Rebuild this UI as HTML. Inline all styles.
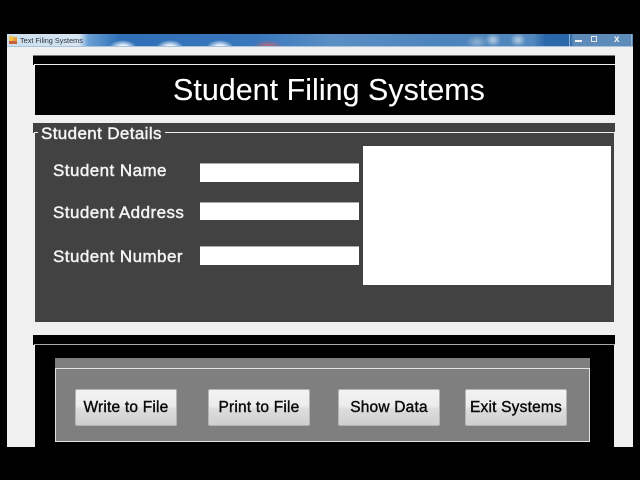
<!DOCTYPE html>
<html>
<head>
<meta charset="utf-8">
<style>
html,body{margin:0;padding:0;background:#000;}
body{width:640px;height:480px;position:relative;overflow:hidden;font-family:"Liberation Sans",sans-serif;}
div{position:absolute;box-sizing:border-box;}
.t{white-space:nowrap;}
.lbl{color:#f4f4f4;font-size:17px;-webkit-text-stroke:0.45px #f4f4f4;left:53px;line-height:18px;letter-spacing:.44px;}
.in{background:#fff;left:200px;width:159px;border:1px solid #aaa;border-width:1px 0 0 0;}
.btn{top:389px;height:37px;width:102px;background:linear-gradient(#f3f3f3 0%,#ececec 45%,#dcdcdc 55%,#cfcfcf 100%);border:1px solid #b4b4b4;border-radius:2px;color:#0a0a0a;font-size:15.5px;text-align:center;line-height:36px;-webkit-text-stroke:0.4px #0a0a0a;letter-spacing:.2px;white-space:nowrap;}
</style>
</head>
<body>
<div style="left:7px;top:47px;width:626px;height:400px;background:#f0f0f0;"></div>
<div style="left:7px;top:34px;width:626px;height:13px;background:
radial-gradient(ellipse 14px 8px at 116px 14px,#f0f6fb 0,#e8f2fa 35%,rgba(232,242,250,0) 100%),
radial-gradient(ellipse 14px 8px at 163px 14px,#f0f6fb 0,#e8f2fa 35%,rgba(232,242,250,0) 100%),
radial-gradient(ellipse 14px 8px at 213px 14px,#f0f6fb 0,#e8f2fa 35%,rgba(232,242,250,0) 100%),
radial-gradient(ellipse 16px 8px at 261px 14px,#b06a80 0,#b06a80 30%,rgba(176,106,128,0) 100%),
radial-gradient(ellipse 11px 7px at 470px 8px,#8fb0cf 0,rgba(143,176,207,0) 100%),
radial-gradient(ellipse 8px 7px at 486px 6px,#b4cde3 0,rgba(168,196,222,0) 100%),
radial-gradient(ellipse 8px 7px at 511px 6px,#b4cde3 0,rgba(168,196,222,0) 100%),
linear-gradient(90deg,#cddfee 0,#d6e4f0 11.5%,#6a9fd4 13%,#2f6fb8 18%,#3a78bd 40%,#5a8fc4 52%,#4c84bd 70%,#5288bd 84%,#2b68ab 86%,#2b68ab 90%,#5d8cba 90.5%,#5d8cba 100%);"></div>
<div style="left:7px;top:46px;width:626px;height:1px;background:#a9c3dc;"></div>
<div class="t" style="left:20px;top:36px;font-size:7.3px;line-height:10px;color:#25333f;">Text Filing Systems</div>
<svg style="position:absolute;left:8px;top:35px" width="10" height="11" viewBox="0 0 10 11"><rect x="1" y="1" width="4" height="5" fill="#f3c04e"/><rect x="5" y="2" width="4" height="6" fill="#e8a23c"/><rect x="1" y="6" width="8" height="3" fill="#c9603c"/></svg>
<div style="left:569px;top:34px;width:1px;height:12px;background:#8fb0cf;"></div>
<div style="left:631px;top:34px;width:1px;height:12px;background:#8fb0cf;"></div>
<div style="left:575px;top:40px;width:7px;height:2px;background:#f2f2f2;"></div>
<div style="left:591px;top:36px;width:6px;height:6px;border:1.5px solid #e6e6e6;"></div>
<div class="t" style="left:614px;top:34px;font-size:10px;line-height:12px;font-weight:bold;color:#f2f2f2;">x</div>

<div style="left:33px;top:55px;width:582px;height:10px;background:#000;border-top:1px solid #777;"></div>
<div style="left:34px;top:64px;width:581px;height:1px;background:#eee;"></div>
<div style="left:35px;top:65px;width:580px;height:50px;background:#000;"></div>
<div class="t" style="left:173px;top:72px;font-size:30.4px;line-height:37px;color:#fff;-webkit-text-stroke:0.1px #fff;letter-spacing:.05px;">Student Filing Systems</div>

<div style="left:33px;top:123px;width:582px;height:10px;background:#424242;"></div>
<div style="left:35px;top:132px;width:579px;height:190px;background:#424242;"></div>
<div style="left:34px;top:132px;width:581px;height:1px;background:#eee;"></div>
<div class="t" style="left:38px;top:125px;padding:0 3px;background:#424242;color:#f6f6f6;font-size:17px;line-height:17px;-webkit-text-stroke:0.45px #f6f6f6;letter-spacing:.37px;">Student Details</div>

<div class="t lbl" style="top:162px;">Student Name</div>
<div class="t lbl" style="top:204px;">Student Address</div>
<div class="t lbl" style="top:248px;">Student Number</div>
<div class="in" style="top:163px;height:19px;"></div>
<div class="in" style="top:202px;height:18px;"></div>
<div class="in" style="top:246px;height:19px;"></div>
<div style="left:363px;top:146px;width:248px;height:139px;background:#fff;"></div>

<div style="left:33px;top:335px;width:582px;height:10px;background:#000;"></div>
<div style="left:34px;top:344px;width:581px;height:1px;background:#aaa;"></div>
<div style="left:35px;top:345px;width:579px;height:102px;background:#000;"></div>
<div style="left:55px;top:358px;width:535px;height:84px;background:#7f7f7f;"></div>
<div style="left:55px;top:368px;width:535px;height:74px;border:1px solid #e2e2e2;"></div>

<div class="btn" style="left:75px;">Write to File</div>
<div class="btn" style="left:208px;">Print to File</div>
<div class="btn" style="left:338px;">Show Data</div>
<div class="btn" style="left:465px;">Exit Systems</div>
</body>
</html>
